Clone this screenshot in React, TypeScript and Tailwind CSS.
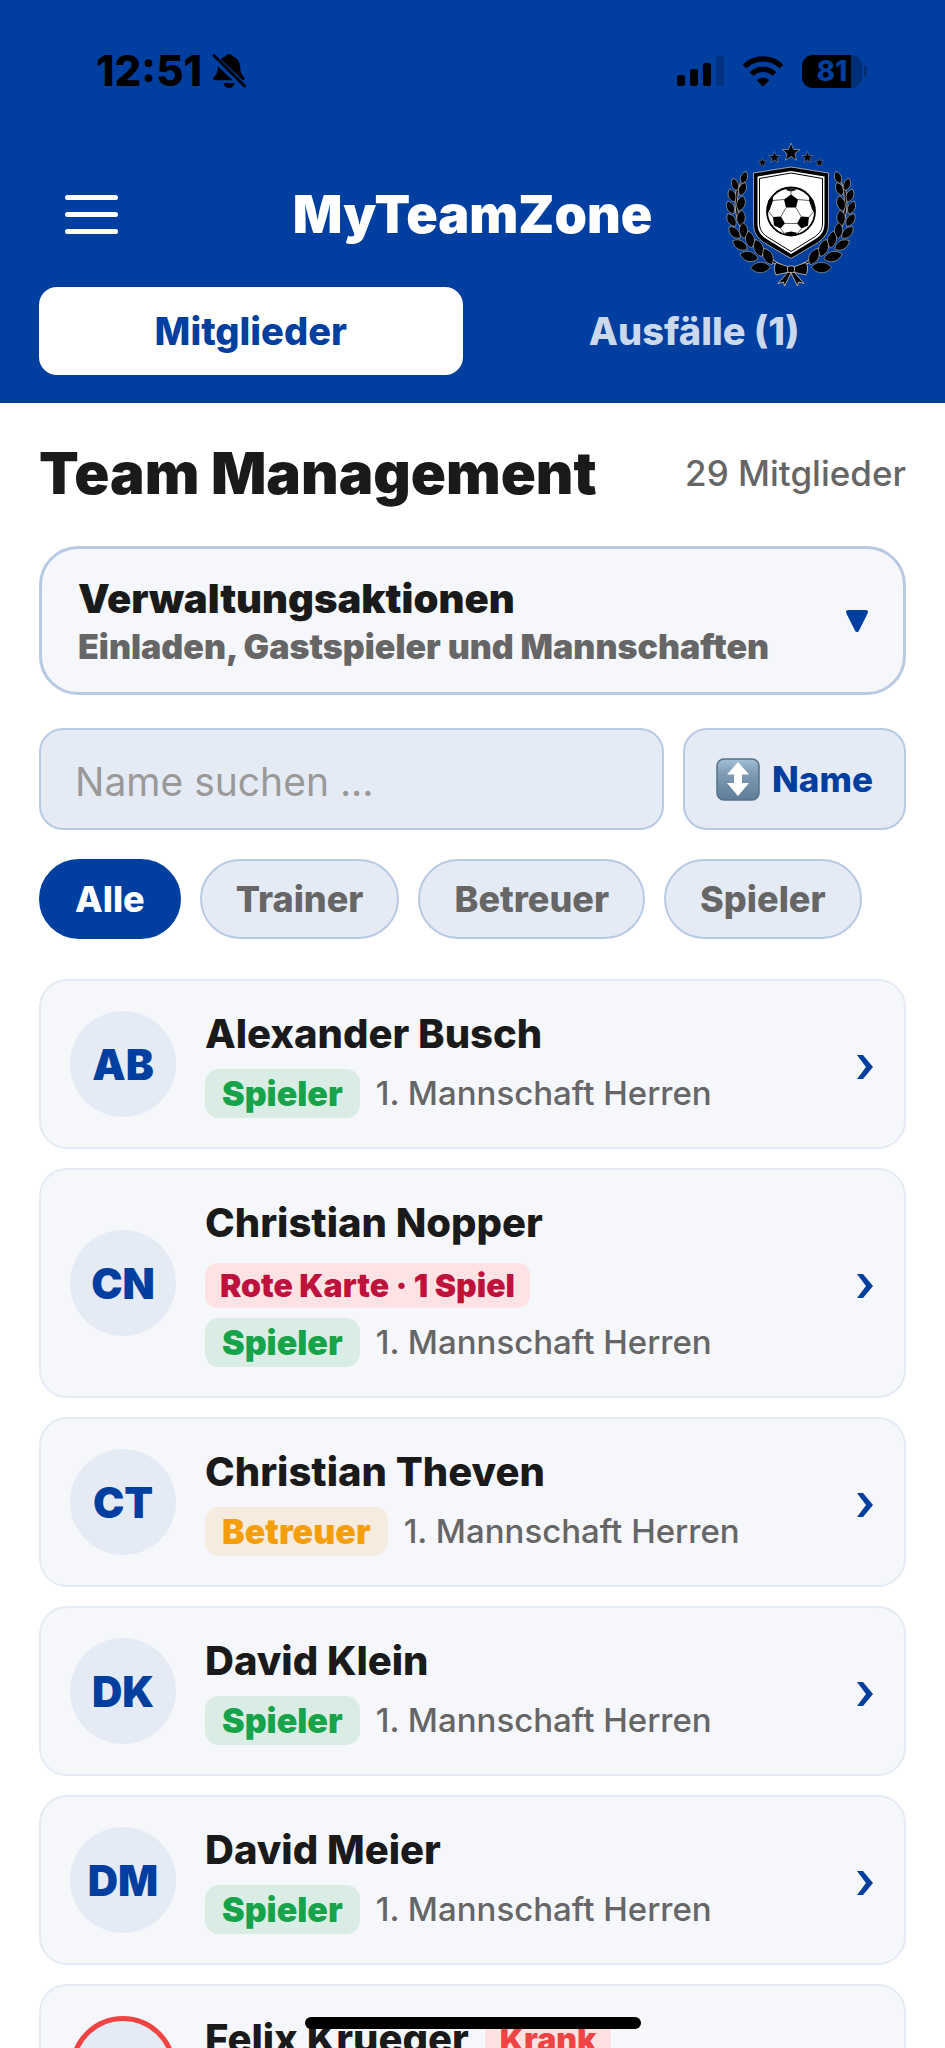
import { clsx } from 'clsx'

type Tone = 'green' | 'amber'

interface Member {
  initials: string
  name: string
  role: string
  tone: Tone
  team: string
  card?: string
  sick?: boolean
}

const members: Member[] = [
  { initials: 'AB', name: 'Alexander Busch', role: 'Spieler', tone: 'green', team: '1. Mannschaft Herren' },
  {
    initials: 'CN',
    name: 'Christian Nopper',
    role: 'Spieler',
    tone: 'green',
    team: '1. Mannschaft Herren',
    card: 'Rote Karte · 1 Spiel',
  },
  { initials: 'CT', name: 'Christian Theven', role: 'Betreuer', tone: 'amber', team: '1. Mannschaft Herren' },
  { initials: 'DK', name: 'David Klein', role: 'Spieler', tone: 'green', team: '1. Mannschaft Herren' },
  { initials: 'DM', name: 'David Meier', role: 'Spieler', tone: 'green', team: '1. Mannschaft Herren' },
  { initials: 'FK', name: 'Felix Krueger', role: 'Spieler', tone: 'green', team: '1. Mannschaft Herren', sick: true },
]

const filters = ['Alle', 'Trainer', 'Betreuer', 'Spieler']

const toneClass: Record<Tone, string> = {
  green: 'bg-[#d9ede5] text-[#16a34a]',
  amber: 'bg-[#f5ecdf] text-[#f59e0b]',
}

function StatusBar() {
  return (
    <div className="flex h-[142px] items-center justify-between pl-24 pr-[78px] text-black">
      <div className="flex items-center gap-2.5">
        <span className="text-[42px] leading-none font-extrabold">12:51</span>
        <svg viewBox="0 0 34 36" className="h-9 w-[34px]" fill="currentColor" aria-label="Stumm">
          <path d="M17 1c1.8 0 3 1 3.600 2.300 5 1.600 7.400 5.800 7.600 11 .2 5 1 7.200 3.600 9.700 1.300 1.300 1.300 3.200-.6 3.200H2.800c-1.900 0-2.200-1.900-.9-3.200 2.900-2.700 3.700-4.700 3.900-9.700.2-5.200 2.600-9.400 7.600-11C14 2 15.200 1 17 1Z" />
          <path d="M11.500 30h11c-.5 3-2.600 5-5.500 5s-5-2-5.500-5Z" />
          <path d="M1 3.500 32.500 34" stroke="#003f9f" strokeWidth="7" />
          <path d="M2 2.500 32.500 33" stroke="currentColor" strokeWidth="2.800" strokeLinecap="round" />
        </svg>
      </div>
      <div className="flex items-center gap-[18px]">
        <svg viewBox="0 0 47 31" className="h-[31px] w-[47px]" fill="currentColor" aria-label="Mobilfunk">
          <rect x="0" y="19" width="8" height="11" rx="2.500" />
          <rect x="13" y="13" width="8" height="17" rx="2.500" />
          <rect x="26" y="7" width="8" height="23" rx="2.500" />
          <rect x="39" y="0" width="8" height="30" rx="2.500" opacity=".2" />
        </svg>
        <svg viewBox="0 0 42 31" className="h-[31px] w-[42px]" aria-label="WLAN">
          <g fill="none" stroke="currentColor" strokeWidth="5.200">
            <path d="M2.500 10.500a26.500 26.500 0 0 1 37 0" />
            <path d="M9.500 18a16.500 16.500 0 0 1 23 0" />
          </g>
          <path d="M21 30.500 14.800 24.300a9 9 0 0 1 12.400 0Z" fill="currentColor" />
        </svg>
        <div className="flex items-center gap-0.5">
          <div className="relative flex h-[33px] w-[60px] items-center justify-center overflow-hidden rounded-[11px] bg-black/25">
            <div className="absolute inset-y-0 left-0 w-[49px] bg-black" />
            <span className="relative text-[28px] leading-none font-extrabold text-[#003f9f]">81</span>
          </div>
          <div className="h-3 w-[3px] rounded-r-full bg-black/25" />
        </div>
      </div>
    </div>
  )
}

// leaf = [x, y, rotation, half length]
const leaves = [
  [35, 54.500, -18, 6.500],
  [32, 65.500, -20, 7],
  [30.500, 77.500, -24, 7],
  [31.500, 90, -32, 7.500],
  [34.500, 102.500, -44, 8],
  [40, 115, -60, 8.500],
  [49, 126.500, -75, 9.500],
  [60.500, 137.500, -92, 10],
  [44, 47.500, 20, 6.500],
  [42.500, 59, 22, 7],
  [41, 73.500, 16, 8],
  [41, 88, 6, 8],
  [43.500, 100.500, -4, 8],
  [50, 109.500, -10, 8.500],
  [58.500, 118, -18, 9],
  [68, 126.500, -26, 9],
]

const starPath = 'M0-10 2.500-3.300 9.500-3.100 4 1.200 5.900 8.100 0 4.100-5.900 8.100-4 1.200-9.500-3.100-2.500-3.300Z'

function Laurel() {
  return (
    <g>
      <path d="M39 52C32 80 35 112 86 139" fill="none" stroke="#cfc6bb" strokeWidth="3.200" />
      <path d="M39 52C32 80 35 112 86 139" fill="none" stroke="#000" strokeWidth="1.600" />
      {leaves.map(([x, y, rotation, r]) => (
        <path
          key={`${x}-${y}`}
          d={`M0 ${-r}C${r * 0.75} ${-r * 0.4} ${r * 0.65} ${r * 0.5} 0 ${r}C${-r * 0.65} ${r * 0.5} ${-r * 0.75} ${-r * 0.4} 0 ${-r}Z`}
          transform={`translate(${x} ${y}) rotate(${rotation})`}
          fill="#000"
          stroke="#b5b0ab"
          strokeWidth=".6"
        />
      ))}
    </g>
  )
}

function ClubCrest() {
  return (
    <svg viewBox="26 12 130 145" className="h-[145px] w-[130px]" role="img" aria-label="Vereinswappen">
      <g fill="#000" stroke="#c9c4c0" strokeWidth=".6">
        <path d={starPath} transform="translate(91 22.500) scale(.95)" />
        <path d={starPath} transform="translate(74.500 27.500) scale(.6)" />
        <path d={starPath} transform="translate(107.500 27.500) scale(.6)" />
        <path d={starPath} transform="translate(62.500 32.500) scale(.46)" />
        <path d={starPath} transform="translate(119.500 32.500) scale(.46)" />
      </g>
      <Laurel />
      <g transform="translate(182 0) scale(-1 1)">
        <Laurel />
      </g>
      <path d="M91 37 128.500 43V94c0 9-4 14-11 19L91 128.500 64.500 113c-7-5-11-10-11-19V43Z" fill="#000" stroke="#c9c4c0" strokeWidth=".8" />
      <path d="M91 41 124.500 46.500V93c0 8-3 12-9 16L91 124 66.500 109c-6-4-9-8-9-16V46.500Z" fill="#fff" />
      <path d="M91 43 122.500 48.500V93c0 7-3 10.500-8 14L91 121.500 67.500 107c-5-3.500-8-7-8-14V48.500Z" fill="#fff" stroke="#000" strokeWidth="1" />
      <circle cx="91" cy="81.500" r="24" fill="#fff" stroke="#000" strokeWidth="1.800" />
      <g fill="#000">
        <path d="M91 64.500 98 69.500 96 77.500H86L84 69.500Z" />
        <path d="M85.500 60 91 57.500 96.500 60 91 61.500Z" />
        <path d="M68 71 72.500 66 73 70.500 70 79 67.500 84Z" />
        <path d="M114 71 109.500 66 109 70.500 112 79 114.500 84Z" />
        <path d="M73 87 81 86.500 85 93.500 80.500 98.500 74 95.500Z" />
        <path d="M109 87 101 86.500 97 93.500 101.500 98.500 108 95.500Z" />
        <path d="M84 103 91 101.500 98 103 91 106Z" />
      </g>
      <g fill="none" stroke="#555" strokeWidth=".9">
        <path d="M91 58V65M84 69.500 73 70.500M98 69.500 109 70.500M86 77.500 81 86.500M96 77.500 101 86.500M85 93.500H97M80.500 98.500 84 103M101.500 98.500 98 103M73 87 69 82M109 87 113 82" />
      </g>
      <g fill="#000" stroke="#d6c8bd" strokeWidth=".8" strokeLinejoin="round">
        <path d="M88 142 78 153.500 83.500 152 84.500 156 91 143 97.500 156 98.500 152 104 153.500 94 142Z" />
        <path d="M89 137 76 132.500C74 136 74 141 76 145L89 142Z" />
        <path d="M93 137 106 132.500C108 136 108 141 106 145L93 142Z" />
        <rect x="87.500" y="136" width="7" height="6.500" rx="2" />
      </g>
    </svg>
  )
}

function Header() {
  return (
    <header className="bg-[#003f9f] pb-7">
      <StatusBar />
      <div className="grid grid-cols-[1fr_auto_1fr] items-center px-[65px]">
        <button type="button" aria-label="Menü öffnen" className="flex w-[53px] flex-col gap-3">
          <span className="h-[5px] rounded-full bg-white" />
          <span className="h-[5px] rounded-full bg-white" />
          <span className="h-[5px] rounded-full bg-white" />
        </button>
        <h1 className="text-[52px] leading-none font-black text-white">MyTeamZone</h1>
        <div className="mr-6 justify-self-end">
          <ClubCrest />
        </div>
      </div>
      <nav className="grid grid-cols-2 gap-5 px-[39px] text-[38px] font-extrabold">
        <button type="button" className="h-[88px] rounded-[18px] bg-white text-[#003f9f]">
          Mitglieder
        </button>
        <button type="button" className="h-[88px] rounded-[18px] text-[#ccd9ec]">
          Ausfälle (1)
        </button>
      </nav>
    </header>
  )
}

function SortIcon() {
  return (
    <svg viewBox="0 0 44 43" className="h-[43px] w-11" aria-hidden="true">
      <defs>
        <linearGradient id="sort-bg" x1="0" y1="0" x2="0" y2="1">
          <stop offset="0" stopColor="#a3bfd6" />
          <stop offset=".35" stopColor="#7f9bb5" />
          <stop offset="1" stopColor="#5f7d98" />
        </linearGradient>
      </defs>
      <rect x="1" y="1" width="42" height="41" rx="7" fill="url(#sort-bg)" stroke="#56718a" strokeWidth="1.500" />
      <path d="M22 4 33 16.500H26V25H33L22 38 11 25H18V16.500H11Z" fill="#fff" />
    </svg>
  )
}

function MemberCard({ member }: { member: Member }) {
  return (
    <li>
      <button
        type="button"
        className="flex w-full items-center rounded-[28px] border-2 border-[#e4ebf5] bg-[#f5f7fb] py-[29px] pr-[31px] pl-[29px] text-left"
      >
        <span
          className={clsx(
            'flex size-[106px] shrink-0 items-center justify-center rounded-full bg-[#e5ebf5] text-[42px] font-black text-[#003f9f]',
            member.sick && 'border-5 border-[#ef4444]',
          )}
        >
          {member.initials}
        </span>
        <span className="ml-[29px] flex flex-1 flex-col items-start">
          <span className="flex items-center gap-4">
            <span className="text-[40px] leading-[48px] font-extrabold text-[#1a1a1a]">{member.name}</span>
            {member.sick && (
              <span className="rounded-xl bg-[#fee2e2] px-[15px] text-[32px] leading-[45px] font-black text-[#ef4444]">
                Krank
              </span>
            )}
          </span>
          {member.card && (
            <span className="mt-4 rounded-xl bg-[#fee2e4] px-[15px] text-[32px] leading-[45px] font-black text-[#be123c]">
              {member.card}
            </span>
          )}
          <span className={clsx('flex items-center gap-4', member.card ? 'mt-2.5' : 'mt-[11px]')}>
            <span
              className={clsx('rounded-[14px] px-[17px] text-[34px] leading-[49px] font-black', toneClass[member.tone])}
            >
              {member.role}
            </span>
            <span className="text-[33px] leading-[49px] font-medium text-[#666]">{member.team}</span>
          </span>
        </span>
        <svg viewBox="0 0 16 24" className="mt-1.5 h-6 w-4" fill="#003f9f" aria-hidden="true">
          <path d="M0 0H6L16 12 6 24H0L9 12Z" />
        </svg>
      </button>
    </li>
  )
}

export default function App() {
  return (
    <div className="relative h-screen overflow-hidden bg-white font-['Inter','Liberation_Sans',sans-serif]">
      <Header />
      <main className="px-[39px] pt-8">
        <div className="flex items-center justify-between">
          <h2 className="text-[58px] leading-[76px] font-black text-[#1a1a1a]">Team Management</h2>
          <p className="text-[35px] font-medium text-[#666]">29 Mitglieder</p>
        </div>

        <button
          type="button"
          className="mt-[35px] flex w-full items-center justify-between rounded-[39px] border-3 border-[#b8c9e3] bg-[#f5f7fb] py-6 pr-[35px] pl-9 text-left"
        >
          <span className="flex flex-col">
            <span className="text-[40px] leading-[52px] font-black text-[#1a1a1a]">Verwaltungsaktionen</span>
            <span className="text-[34px] leading-[43px] font-black text-[#666]">
              Einladen, Gastspieler und Mannschaften
            </span>
          </span>
          <svg viewBox="0 0 22 22" className="size-[22px]" aria-hidden="true">
            <path d="M2 2H20L11 20Z" fill="#003f9f" stroke="#003f9f" strokeWidth="4" strokeLinejoin="round" />
          </svg>
        </button>

        <div className="mt-[33px] flex gap-[19px]">
          <input
            type="search"
            aria-label="Name suchen"
            placeholder="Name suchen ..."
            className="h-[102px] min-w-0 flex-1 rounded-[24px] border-2 border-[#b8c9e3] bg-[#e5ebf5] px-[34px] pt-1 text-[39px] placeholder:text-[#999]"
          />
          <button
            type="button"
            className="flex h-[102px] w-[223px] items-center justify-center gap-3 rounded-[24px] border-2 border-[#b8c9e3] bg-[#e5ebf5] text-[35px] font-extrabold text-[#003f9f]"
          >
            <SortIcon />
            Name
          </button>
        </div>

        <div className="mt-[29px] flex gap-[19px]">
          {filters.map((filter, i) => (
            <button
              key={filter}
              type="button"
              className={clsx(
                'h-20 rounded-full border-2 px-[34px] text-[36px] font-extrabold',
                i === 0 ? 'border-[#003f9f] bg-[#003f9f] text-white' : 'border-[#b8c9e3] bg-[#e5ebf5] text-[#666]',
              )}
            >
              {filter}
            </button>
          ))}
        </div>

        <ul className="mt-10 flex flex-col gap-[19px]">
          {members.map((member) => (
            <MemberCard key={member.name} member={member} />
          ))}
        </ul>
      </main>
      <div className="absolute bottom-[19px] left-1/2 h-3 w-[336px] -translate-x-1/2 rounded-full bg-black" />
    </div>
  )
}
